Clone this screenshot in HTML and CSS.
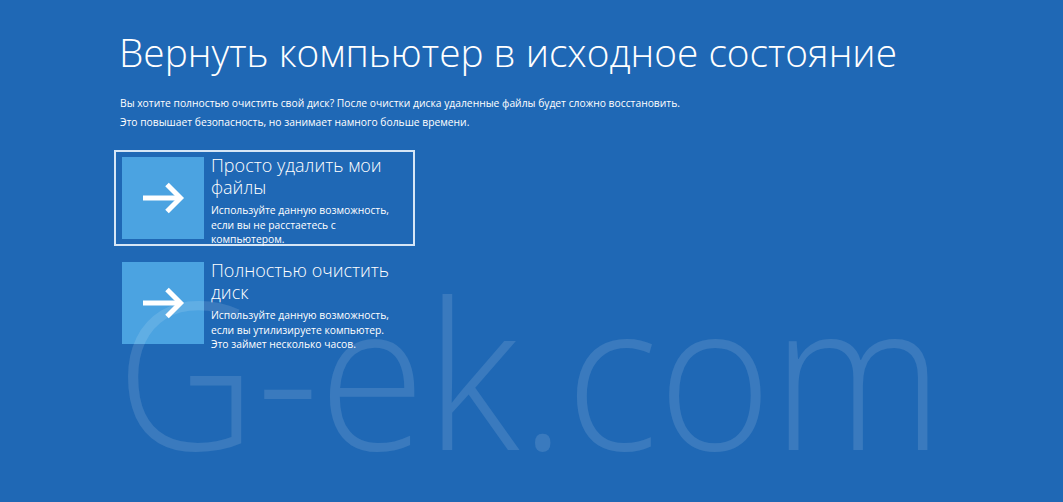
FILE: index.html
```html
<!DOCTYPE html>
<html lang="ru">
<head>
<meta charset="utf-8">
<title>Вернуть компьютер в исходное состояние</title>
<link rel="stylesheet" href="styles.css">
</head>
<body>
<main class="page">
  <h1 class="title">Вернуть компьютер в исходное состояние</h1>
  <p class="lead">Вы хотите полностью очистить свой диск? После очистки диска удаленные файлы будет сложно восстановить.<br>Это повышает безопасность, но занимает намного больше времени.</p>
  <div class="options">
    <div class="option selected">
      <div class="tile">
        <svg width="82" height="82" viewBox="0 0 82 82"><path d="M21 41H57" stroke="#fff" stroke-width="5" fill="none"/><path d="M45 27.5L58.5 41L45 54.5" stroke="#fff" stroke-width="5" fill="none" stroke-linejoin="miter"/></svg>
      </div>
      <div class="text">
        <div class="heading">Просто удалить мои файлы</div>
        <div class="desc">Используйте данную возможность, если вы не расстаетесь с компьютером.</div>
      </div>
    </div>
    <div class="option">
      <div class="tile">
        <svg width="82" height="82" viewBox="0 0 82 82"><path d="M21 41H57" stroke="#fff" stroke-width="5" fill="none"/><path d="M45 27.5L58.5 41L45 54.5" stroke="#fff" stroke-width="5" fill="none" stroke-linejoin="miter"/></svg>
      </div>
      <div class="text">
        <div class="heading">Полностью очистить диск</div>
        <div class="desc">Используйте данную возможность, если вы утилизируете компьютер. Это займет несколько часов.</div>
      </div>
    </div>
  </div>
  <div class="watermark">G-ek.com</div>
</main>
</body>
</html>
```

FILE: styles.css
```css
html, body {
  margin: 0;
  padding: 0;
}
body {
  background: #1f68b5;
  color: #fff;
  font-family: "Open Sans", "Noto Sans", "DejaVu Sans", sans-serif;
  width: 1063px;
  height: 502px;
  overflow: hidden;
}
.page {
  position: relative;
  height: 502px;
  padding: 27px 0 0 119px;
  box-sizing: border-box;
}
.title {
  margin: 0;
  font-size: 38.8px;
  font-weight: 300;
  line-height: 50px;
  letter-spacing: 0;
}
.lead {
  margin: 17px 0 0 1px;
  font-size: 10.3px;
  line-height: 19px;
}
.options {
  margin: 18px 0 0 -5px;
  display: flex;
  flex-direction: column;
  gap: 9px;
}
.option {
  width: 301px;
  height: 96px;
  box-sizing: border-box;
  border: 2px solid transparent;
  padding: 5px 6px;
  display: flex;
  gap: 7px;
  align-items: flex-start;
}
.option.selected {
  border-color: #d6e6f6;
}
.tile {
  width: 82px;
  height: 82px;
  background: #4ba3e1;
  flex: none;
}
.tile svg {
  display: block;
}
.text {
  width: 186px;
  margin-top: -3px;
}
.heading {
  font-size: 18px;
  line-height: 22px;
  font-weight: 300;
}
.desc {
  font-size: 10.3px;
  line-height: 14.5px;
  margin-top: 5px;
}
.watermark {
  position: absolute;
  left: 116px;
  top: 268px;
  font-size: 205px;
  font-weight: 350;
  line-height: 1;
  color: rgba(255, 255, 255, 0.12);
  white-space: nowrap;
  transform: scaleX(0.947);
  transform-origin: left top;
}
```
